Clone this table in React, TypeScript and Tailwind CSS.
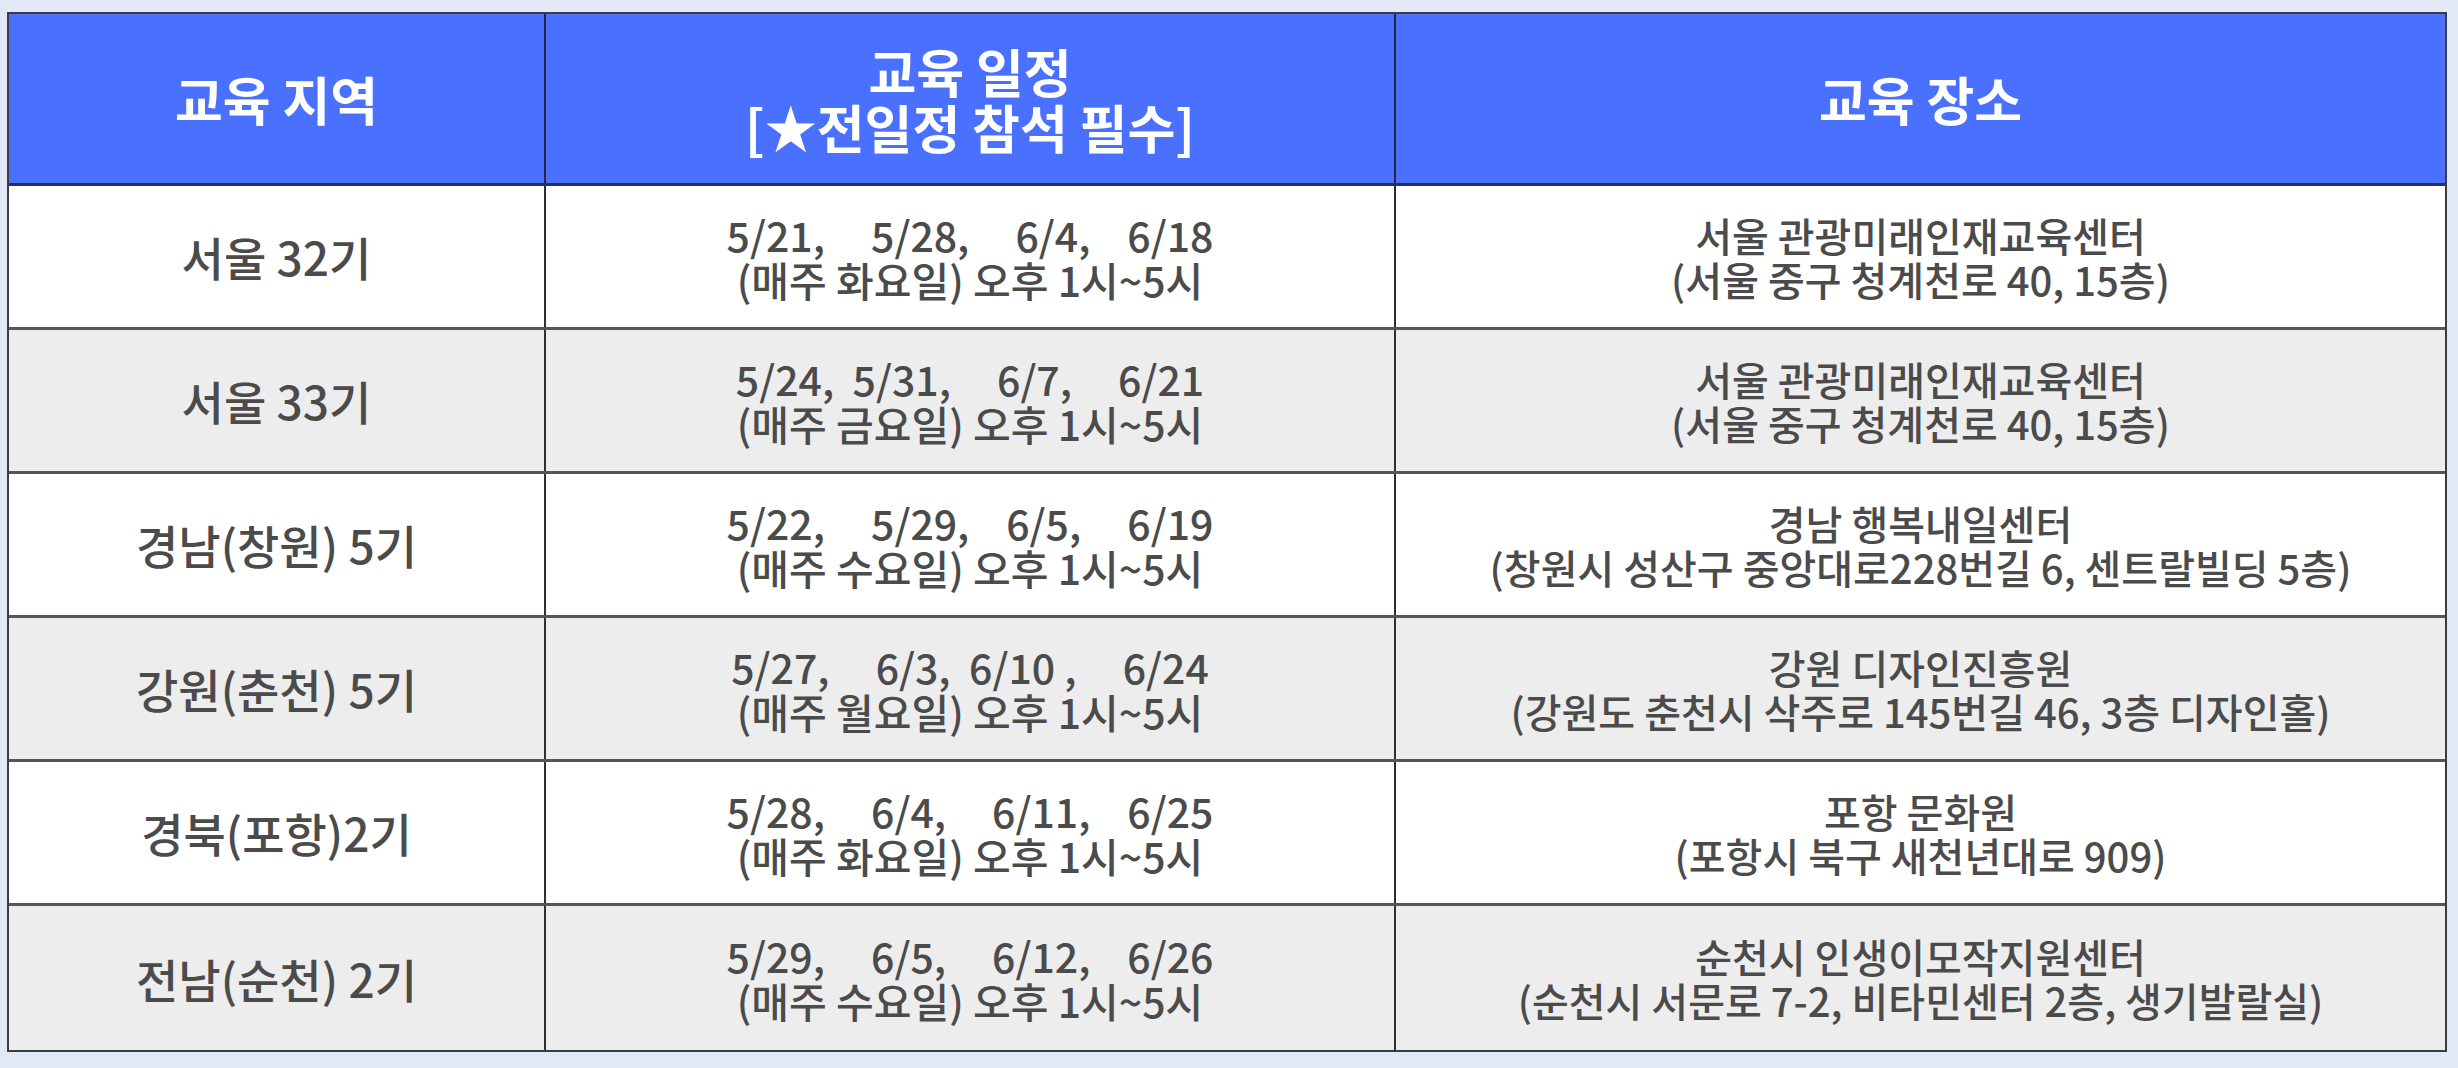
import React from 'react';

interface Session {
  region: string;
  dates: string;
  day: string;
  place: string;
  address: string;
}

const sessions: Session[] = [
  {
    region: '서울 32기',
    dates: '5/21,     5/28,     6/4,    6/18',
    day: '(매주 화요일) 오후 1시~5시',
    place: '서울 관광미래인재교육센터',
    address: '(서울 중구 청계천로 40, 15층)'
  },
  {
    region: '서울 33기',
    dates: '5/24,  5/31,     6/7,     6/21',
    day: '(매주 금요일) 오후 1시~5시',
    place: '서울 관광미래인재교육센터',
    address: '(서울 중구 청계천로 40, 15층)'
  },
  {
    region: '경남(창원) 5기',
    dates: '5/22,     5/29,    6/5,     6/19',
    day: '(매주 수요일) 오후 1시~5시',
    place: '경남 행복내일센터',
    address: '(창원시 성산구 중앙대로228번길 6, 센트랄빌딩 5층)'
  },
  {
    region: '강원(춘천) 5기',
    dates: '5/27,     6/3,  6/10 ,     6/24',
    day: '(매주 월요일) 오후 1시~5시',
    place: '강원 디자인진흥원',
    address: '(강원도 춘천시 삭주로 145번길 46, 3층 디자인홀)'
  },
  {
    region: '경북(포항)2기',
    dates: '5/28,     6/4,     6/11,    6/25',
    day: '(매주 화요일) 오후 1시~5시',
    place: '포항 문화원',
    address: '(포항시 북구 새천년대로 909)'
  },
  {
    region: '전남(순천) 2기',
    dates: '5/29,     6/5,     6/12,    6/26',
    day: '(매주 수요일) 오후 1시~5시',
    place: '순천시 인생이모작지원센터',
    address: '(순천시 서문로 7-2, 비타민센터 2층, 생기발랄실)'
  }
];

export default function App() {
  return (
    <div className="min-h-screen bg-[#e3e8f6] pt-[12px] pl-[7px] pr-[11px] font-['Noto_Sans_CJK_KR','Noto_Sans',sans-serif]">
      <div className="border-2 border-[#3b3b44]">
        {/* 헤더 */}
        <div className="grid grid-cols-[537px_850px_1fr] h-[172px] bg-[#4a70ff] border-b-[3px] border-[#27305a] text-white font-bold text-[52px]">
          <div className="flex items-center justify-center border-r-2 border-[#1f2748]">
            교육 지역
          </div>
          <div className="flex flex-col items-center justify-center leading-[56px] border-r-2 border-[#1f2748]">
            <span>교육 일정</span>
            <span>[★전일정 참석 필수]</span>
          </div>
          <div className="flex items-center justify-center">교육 장소</div>
        </div>

        {/* 본문 */}
        {sessions.map((s, i) => (
          <div
            key={i}
            className={`grid grid-cols-[537px_850px_1fr] h-[144px] text-[#4b4b4b] font-medium ${
              i % 2 === 0 ? 'bg-white' : 'bg-[#ededed]'
            } ${i < sessions.length - 1 ? 'border-b-[3px] border-[#555555]' : ''}`}
          >
            <div className="flex items-center justify-center text-[46px] border-r-2 border-[#2e2e38]">
              {s.region}
            </div>
            <div className="flex flex-col items-center justify-center text-[41px] leading-[45px] border-r-2 border-[#2e2e38]">
              <span className="whitespace-pre">{s.dates}</span>
              <span>{s.day}</span>
            </div>
            <div className="flex flex-col items-center justify-center text-[40px] leading-[44px]">
              <span>{s.place}</span>
              <span>{s.address}</span>
            </div>
          </div>
        ))}
      </div>
    </div>
  );
}
